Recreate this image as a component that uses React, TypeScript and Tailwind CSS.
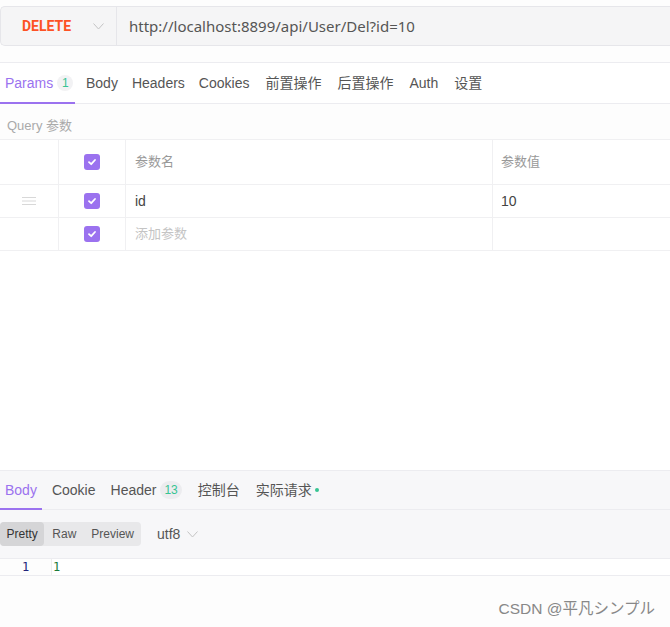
import React from "react";

const font = { fontFamily: '"Liberation Sans", "Noto Sans CJK SC", sans-serif' };
const urlFont = { fontFamily: '"Noto Sans", "Liberation Sans", sans-serif' };

function Check() {
  return (
    <span className="w-4 h-4 rounded-[3px] bg-[#9b72ef] flex items-center justify-center">
      <svg width="10" height="10" viewBox="0 0 10 10">
        <path d="M2 5.2 L4.2 7.2 L8 3" stroke="#fff" strokeWidth="1.8" fill="none" strokeLinecap="round" strokeLinejoin="round" />
      </svg>
    </span>
  );
}

function Chevron({ color = "#bbb" }: { color?: string }) {
  return (
    <svg width="11" height="7" viewBox="0 0 11 7">
      <path d="M0.5 0.5 L5.5 6 L10.5 0.5" stroke={color} strokeWidth="1" fill="none" />
    </svg>
  );
}

export default function App() {
  const tabs = [
    { label: "Body", cls: "pl-[8px] pr-[7px]" },
    { label: "Headers", cls: "px-[7px]" },
    { label: "Cookies", cls: "pl-[7px] pr-[8px]" },
    { label: "前置操作", cls: "px-[8px]" },
    { label: "后置操作", cls: "px-[8px]" },
    { label: "Auth", cls: "px-[8px]" },
    { label: "设置", cls: "px-[8px]" },
  ];
  return (
    <div className="w-[670px] h-[627px] bg-[#fdfdfd] flex flex-col text-[#444]" style={font}>
      {/* url bar */}
      <div className="h-[6px]" />
      <div className="h-[40px] flex items-center bg-[#f5f5f6] border border-[#e6e6ea] border-r-0 rounded-l-[5px]">
        <div className="w-[116px] h-full flex items-center border-r border-[#e6e6ea]">
          <span className="ml-[21px] w-[48px] text-[14px] font-bold text-[#fd5225]" style={{ fontFamily: "Roboto, sans-serif" }}>DELETE</span>
          <span className="ml-[23px] flex items-center"><Chevron color="#c4c4c4" /></span>
        </div>
        <span className="ml-[12px] text-[15px] text-[#555]" style={urlFont}>http://localhost:8899/api/User/Del?id=10</span>
      </div>

      {/* request tabs */}
      <div className="mt-[16px] h-[42px] border-t border-b border-[#ececf0] bg-white flex items-stretch">
        <div className="relative w-[75px] mr-[3px] flex items-center pl-[5px]">
          <span className="text-[14px] text-[#9b72ef]">Params</span>
          <span className="ml-[4px] w-[16px] h-[16px] rounded-full bg-[#f2f2f4] text-[12px] text-[#37c493] flex items-center justify-center">1</span>
          <span className="absolute left-0 right-0 bottom-[-1px] h-[2px] bg-[#9b72ef]" />
        </div>
        {tabs.map((t) => (
          <div key={t.label} className={`flex items-center text-[14px] text-[#555] ${t.cls}`}>
            {t.label}
          </div>
        ))}
      </div>

      <div className="h-[35px] flex items-center pt-[9px] pl-[7px] text-[13px] text-[#aaa]">Query 参数</div>

      {/* table */}
      <div className="border-t border-[#f0f0f2] bg-white">
        <div className="h-[45px] flex border-b border-[#f0f0f2]">
          <div className="w-[59px] border-r border-[#f0f0f2]" />
          <div className="w-[67px] border-r border-[#f0f0f2] flex items-center justify-center"><Check /></div>
          <div className="w-[367px] border-r border-[#f0f0f2] flex items-center pl-[9px] text-[13px] text-[#999]">参数名</div>
          <div className="flex-1 flex items-center pl-[8px] text-[13px] text-[#999]">参数值</div>
        </div>
        <div className="h-[33px] flex border-b border-[#f0f0f2]">
          <div className="w-[59px] border-r border-[#f0f0f2] flex items-center justify-center">
            <svg width="14" height="10" viewBox="0 0 14 10">
              <path d="M0 1.5 H14 M0 5 H14 M0 8.5 H14" stroke="#d8d8d8" strokeWidth="1" />
            </svg>
          </div>
          <div className="w-[67px] border-r border-[#f0f0f2] flex items-center justify-center"><Check /></div>
          <div className="w-[367px] border-r border-[#f0f0f2] flex items-center pl-[9px] text-[14px] text-[#444]">id</div>
          <div className="flex-1 flex items-center pl-[8px] text-[14px] text-[#444]">10</div>
        </div>
        <div className="h-[33px] flex border-b border-[#f0f0f2]">
          <div className="w-[59px] border-r border-[#f0f0f2]" />
          <div className="w-[67px] border-r border-[#f0f0f2] flex items-center justify-center"><Check /></div>
          <div className="w-[367px] border-r border-[#f0f0f2] flex items-center pl-[9px] text-[13px] text-[#c4c4c4]">添加参数</div>
          <div className="flex-1" />
        </div>
      </div>

      <div className="flex-1 bg-white" />

      {/* response */}
      <div className="h-[157px] flex flex-col bg-[#fdfdfd]">
        <div className="h-[40px] border-t border-b border-[#ececf0] bg-[#f7f7f9] flex items-stretch">
          <div className="relative flex items-center px-[5px] mr-[3px] text-[14px] text-[#9b72ef]">
            Body
            <span className="absolute left-0 right-0 bottom-[-1px] h-[2px] bg-[#9b72ef]" />
          </div>
          <div className="flex items-center px-[7px] text-[14px] text-[#555]">Cookie</div>
          <div className="flex items-center px-[8px] text-[14px] text-[#555]">
            Header
            <span className="ml-[4px] px-[4px] h-[18px] rounded-full bg-[#ececef] text-[12px] text-[#37c493] flex items-center">13</span>
          </div>
          <div className="flex items-center px-[8px] text-[14px] text-[#555]">控制台</div>
          <div className="flex items-center px-[8px] text-[14px] text-[#555]">
            实际请求
            <span className="ml-[3px] w-[4px] h-[4px] rounded-full bg-[#37c493]" />
          </div>
        </div>
        <div className="h-[48px] bg-[#f7f7f9] flex items-center">
          <div className="h-[24px] w-[141px] flex rounded-[4px] bg-[#e8e8ea] text-[12px] text-[#555]">
            <span className="w-[46px] rounded-[4px] bg-[#d5d5d7] flex items-center justify-center text-[#333]">Pretty</span>
            <span className="px-[8px] flex items-center">Raw</span>
            <span className="px-[7px] flex items-center">Preview</span>
          </div>
          <span className="ml-[16px] text-[14px] text-[#555]">utf8</span>
          <span className="ml-[7px] flex items-center"><Chevron color="#c4c4c4" /></span>
        </div>
        <div className="h-[18px] flex border-t border-b border-[#ececf0] bg-white text-[12px]" style={{ fontFamily: '"DejaVu Sans Mono", monospace' }}>
          <div className="w-[51px] flex items-center pl-[22px] text-[#23237a] bg-[#fdfdfd]">1</div>
          <div className="flex-1 flex items-center pl-[1px] text-[#1b7a3a] border-l border-[#eee]">1</div>
        </div>
        <div className="flex-1 flex items-end justify-end pr-[15px] pb-[7px]">
          <span className="text-[15.5px] text-[#888]">CSDN @平凡シンプル</span>
        </div>
      </div>
    </div>
  );
}
